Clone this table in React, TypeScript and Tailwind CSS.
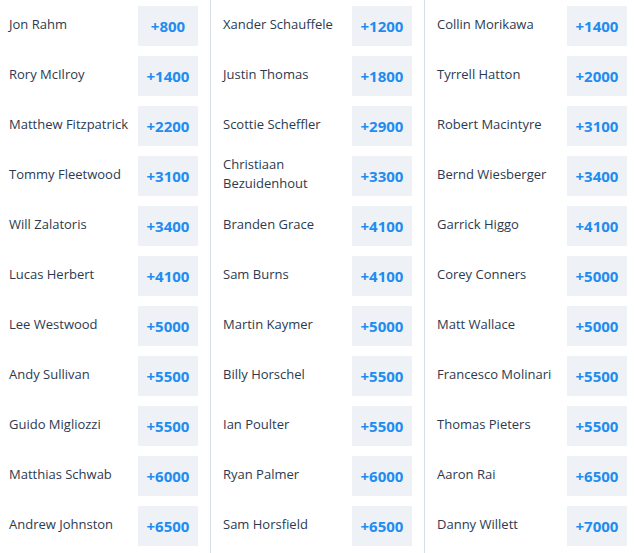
import React from "react";

const cols: [string, string][][] = [
  [
    ["Jon Rahm", "+800"],
    ["Rory McIlroy", "+1400"],
    ["Matthew Fitzpatrick", "+2200"],
    ["Tommy Fleetwood", "+3100"],
    ["Will Zalatoris", "+3400"],
    ["Lucas Herbert", "+4100"],
    ["Lee Westwood", "+5000"],
    ["Andy Sullivan", "+5500"],
    ["Guido Migliozzi", "+5500"],
    ["Matthias Schwab", "+6000"],
    ["Andrew Johnston", "+6500"],
  ],
  [
    ["Xander Schauffele", "+1200"],
    ["Justin Thomas", "+1800"],
    ["Scottie Scheffler", "+2900"],
    ["Christiaan Bezuidenhout", "+3300"],
    ["Branden Grace", "+4100"],
    ["Sam Burns", "+4100"],
    ["Martin Kaymer", "+5000"],
    ["Billy Horschel", "+5500"],
    ["Ian Poulter", "+5500"],
    ["Ryan Palmer", "+6000"],
    ["Sam Horsfield", "+6500"],
  ],
  [
    ["Collin Morikawa", "+1400"],
    ["Tyrrell Hatton", "+2000"],
    ["Robert Macintyre", "+3100"],
    ["Bernd Wiesberger", "+3400"],
    ["Garrick Higgo", "+4100"],
    ["Corey Conners", "+5000"],
    ["Matt Wallace", "+5000"],
    ["Francesco Molinari", "+5500"],
    ["Thomas Pieters", "+5500"],
    ["Aaron Rai", "+6500"],
    ["Danny Willett", "+7000"],
  ],
];

export default function App() {
  return (
    <div
      className="w-[634px] h-[553px] overflow-hidden bg-white"
      style={{ fontFamily: '"Open Sans", "Liberation Sans", sans-serif' }}
    >
      <div className="flex ml-[-3px] h-full">
        {cols.map((col, ci) => (
          <div
            key={ci}
            className={`w-[214px] shrink-0 pl-3 pr-3 pt-px h-full ${
              ci < 2 ? "border-r border-[#d9dee5]" : ""
            }`}
          >
            {col.map(([name, odds]) => (
              <div key={name} className="h-[50px] flex items-center justify-between">
                <div className="text-[13px] leading-[19px] text-[#2c3a50] w-[125px] mt-[-4px]">
                  {name}
                </div>
                <div className="w-[60px] h-[40px] bg-[#eef2f7] flex items-center justify-center text-[15px] font-bold text-[#1f8cf0]">
                  {odds}
                </div>
              </div>
            ))}
          </div>
        ))}
      </div>
    </div>
  );
}
